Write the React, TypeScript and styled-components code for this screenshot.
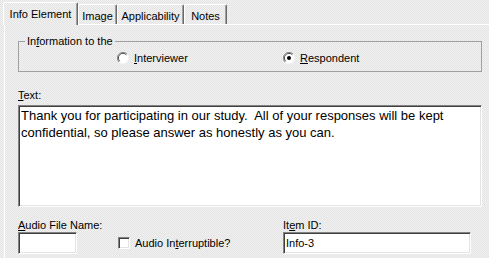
import React from 'react';
import styled, { createGlobalStyle } from 'styled-components';

const dither = 'repeating-conic-gradient(#f2f2f2 0 25%, #e3e3e3 0 50%) 0 0 / 2px 2px fixed';

const GlobalStyle = createGlobalStyle`
  html, body {
    margin: 0;
    padding: 0;
  }
  body {
    background: ${dither};
    font-family: "Liberation Sans", Arial, sans-serif;
    font-size: 11px;
    color: #000;
  }
`;

const Window = styled.div`
  width: 489px;
  height: 258px;
  overflow: hidden;
  box-sizing: border-box;
  padding-top: 2px;
  display: flex;
  flex-direction: column;
  background: ${dither};
`;

const TabStrip = styled.div`
  display: flex;
  align-items: flex-end;
  height: 22px;
  padding-left: 3px;
  position: relative;
  z-index: 1;
`;

const Tab = styled.div<{ $w: number; $active?: boolean }>`
  box-sizing: border-box;
  width: ${p => p.$w}px;
  height: ${p => (p.$active ? 23 : 20)}px;
  margin-bottom: ${p => (p.$active ? -1 : 0)}px;
  padding-top: ${p => (p.$active ? 0 : 2)}px;
  display: flex;
  align-items: center;
  justify-content: center;
  border-top: 1px solid #fff;
  border-left: 1px solid #fff;
  border-right: 1px solid #696969;
  border-radius: 2px 2px 0 0;
  box-shadow: inset -1px 0 0 #a0a0a0;
  background: ${dither};
  white-space: nowrap;
`;

const Panel = styled.div`
  flex: 1;
  margin-left: 4px;
  border-top: 1px solid #fff;
  border-left: 1px solid #fff;
  padding-left: 13px;
  display: flex;
  flex-direction: column;
`;

const GroupBox = styled.fieldset`
  box-sizing: border-box;
  width: 464px;
  height: 37px;
  margin: 10px 0 0 0;
  padding: 0;
  border: 1px solid #a0a0a0;
  min-inline-size: 0;
`;

const Legend = styled.legend`
  margin-left: 6px;
  padding: 0 2px;
  line-height: 13px;
`;

const RadioRow = styled.div`
  display: grid;
  grid-template-columns: 166px auto;
  align-items: center;
  height: 20px;
  padding-left: 98px;
`;

const Option = styled.label`
  display: flex;
  align-items: center;
  gap: 5px;
  line-height: 13px;
`;

const FieldLabel = styled.div<{ $top?: number }>`
  line-height: 13px;
  margin-top: ${p => p.$top ?? 0}px;
  white-space: nowrap;
`;

const sunken = `
  box-sizing: border-box;
  border-style: solid;
  border-width: 1px;
  border-color: #828282 #fff #fff #828282;
  box-shadow: inset 1px 1px 0 #404040, inset -1px -1px 0 #e3e3e3;
  background: #fff;
  outline: none;
`;

const TextBox = styled.textarea`
  ${sunken}
  width: 464px;
  height: 102px;
  margin-top: 3px;
  padding: 1px 2px 0 2px;
  resize: none;
  overflow: hidden;
  font-family: "Liberation Sans", Arial, sans-serif;
  font-size: 13px;
  line-height: 17px;
  color: #000;
`;

const BottomGrid = styled.div`
  display: grid;
  grid-template-columns: 100px 165px 188px;
  grid-template-rows: 13px 22px;
  row-gap: 0;
  margin-top: 12px;
  align-items: center;
`;

const Input = styled.input<{ $w: number }>`
  ${sunken}
  width: ${p => p.$w}px;
  height: 22px;
  padding: 0 2px;
  font-family: "Liberation Sans", Arial, sans-serif;
  font-size: 11px;
  color: #000;
`;

const Check = styled.span`
  ${sunken}
  display: inline-block;
  width: 12px;
  height: 12px;
`;

const Spacer = styled.div``;

const Radio = ({ checked }: { checked?: boolean }) => (
  <svg width="12" height="12" viewBox="0 0 12 12">
    <circle cx="6" cy="6" r="5.5" fill="#fff" />
    <path d="M10 2 A5.5 5.5 0 0 0 2 10" fill="none" stroke="#8a8a8a" strokeWidth="1" />
    <path d="M9.3 2.7 A4.5 4.5 0 0 0 2.7 9.3" fill="none" stroke="#4a4a4a" strokeWidth="1" />
    <path d="M2 10 A5.5 5.5 0 0 0 10 2" fill="none" stroke="#f4f4f4" strokeWidth="1" />
    {checked && <circle cx="6" cy="6" r="2" fill="#000" />}
  </svg>
);

export default function App() {
  return (
    <>
      <GlobalStyle />
      <Window>
        <TabStrip>
          <Tab $w={75} $active>Info Element</Tab>
          <Tab $w={39}>Image</Tab>
          <Tab $w={67}>Applicability</Tab>
          <Tab $w={43}>Notes</Tab>
        </TabStrip>
        <Panel>
          <GroupBox>
            <Legend>In<u>f</u>ormation to the</Legend>
            <RadioRow>
              <Option><Radio /><span><u>I</u>nterviewer</span></Option>
              <Option><Radio checked /><span><u>R</u>espondent</span></Option>
            </RadioRow>
          </GroupBox>

          <FieldLabel $top={17}><u>T</u>ext:</FieldLabel>
          <TextBox
            readOnly
            defaultValue={'Thank you for participating in our study.  All of your responses will be kept confidential, so please answer as honestly as you can.'}
          />

          <BottomGrid>
            <FieldLabel><u>A</u>udio File Name:</FieldLabel>
            <Spacer />
            <FieldLabel>It<u>e</u>m ID:</FieldLabel>
            <Input $w={59} readOnly defaultValue="" />
            <Option><Check /><span>Audio In<u>t</u>erruptible?</span></Option>
            <Input $w={188} readOnly defaultValue="Info-3" />
          </BottomGrid>
        </Panel>
      </Window>
    </>
  );
}
